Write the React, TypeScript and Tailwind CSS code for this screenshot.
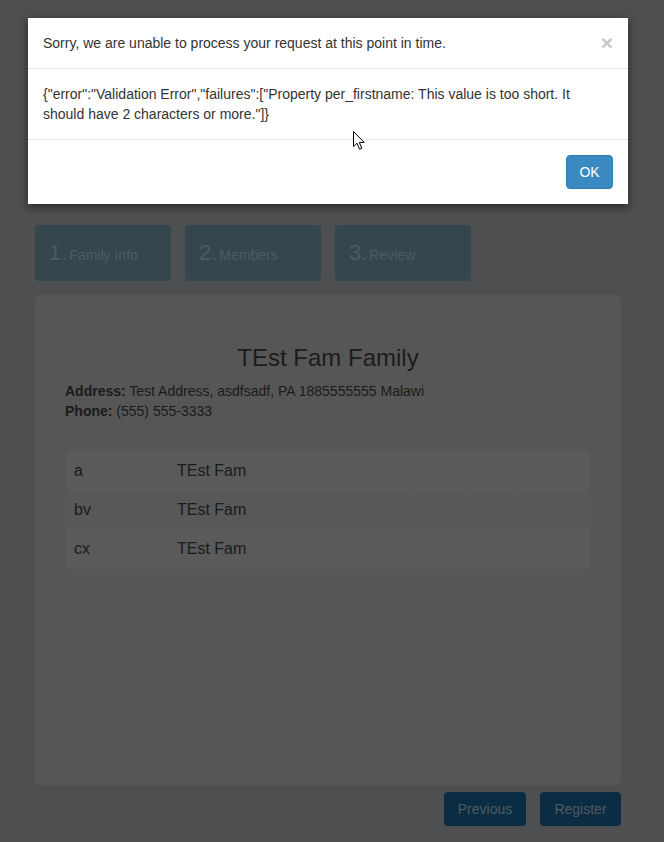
const STEPS = [
  { n: "1.", label: "Family Info" },
  { n: "2.", label: "Members" },
  { n: "3.", label: "Review" },
];

const MEMBERS = [
  { first: "a", last: "TEst Fam" },
  { first: "bv", last: "TEst Fam" },
  { first: "cx", last: "TEst Fam" },
];

export default function App() {
  return (
    <div className="relative min-h-[842px] w-[664px] bg-[#4e4f51] font-['Liberation_Sans',Arial,sans-serif] text-[14px] text-[#1b1b1b]">
      <div className="ml-[35px] w-[586px] pt-[225px]">
        <div className="flex gap-[14px]">
          {STEPS.map((s) => (
            <div
              key={s.n}
              className="flex h-[56px] w-[136px] items-center rounded-[4px] bg-[#36464e] px-[14px] text-[#4b5b63]"
            >
              <span className="text-[22px] leading-none">{s.n}</span>
              <span className="ml-[2px] mt-[4px] text-[14px]">{s.label}</span>
            </div>
          ))}
        </div>

        <section className="mt-[14px] h-[490px] rounded-[5px] bg-[#565656] px-[30px] pt-[50px]">
          <h2 className="text-center text-[24px] leading-[26px] text-[#1c1c1c]">TEst Fam Family</h2>
          <div className="mt-[10px] leading-[20px]">
            <p>
              <b>Address:</b> Test Address, asdfsadf, PA 1885555555 Malawi
            </p>
            <p>
              <b>Phone:</b> (555) 555-3333
            </p>
          </div>

          <table className="mt-[30px] ml-[1px] w-[524px] border-collapse text-[16px]">
            <tbody>
              {MEMBERS.map((m, i) => (
                <tr key={m.first} className={i % 2 === 0 ? "bg-[#5a5a5a]" : "bg-[#585858]"}>
                  <td className="h-[39px] w-[103px] border-t border-[#5c5c5c] pl-[8px]">{m.first}</td>
                  <td className="w-[246px] border-t border-[#5c5c5c] pl-[8px]">{m.last}</td>
                  <td className="w-[50px] border-t border-l border-[#5c5c5c]" />
                  <td className="w-[50px] border-t border-l border-[#5c5c5c]" />
                  <td className="border-t border-l border-[#5c5c5c]" />
                </tr>
              ))}
            </tbody>
          </table>
        </section>

        <div className="mt-[7px] flex justify-end gap-[14px]">
          <button className="h-[34px] w-[82px] rounded-[4px] bg-[#0b2d44] text-[14px] text-[#4f5a62]">Previous</button>
          <button className="h-[34px] w-[81px] rounded-[4px] bg-[#0b2d44] text-[14px] text-[#4f5a62]">Register</button>
        </div>
      </div>

      {/* modal */}
      <div className="absolute left-[28px] top-[18px] w-[600px] bg-white text-[#333] shadow-[0_3px_9px_rgba(0,0,0,0.5)]">
        <div className="flex items-center justify-between border-b border-[#e5e5e5] px-[15px] py-[15px]">
          <p className="leading-[20px]">Sorry, we are unable to process your request at this point in time.</p>
          <span className="text-[21px] font-bold leading-[20px] text-[#c6c6c6]">×</span>
        </div>
        <div className="border-b border-[#e5e5e5] px-[15px] py-[15px] leading-[20px]">
          {'{"error":"Validation Error","failures":["Property per_firstname: This value is too short. It should have 2 characters or more."]}'}
        </div>
        <div className="flex justify-end p-[15px]">
          <button className="h-[34px] w-[47px] rounded-[4px] border border-[#2e7db3] bg-[#3a89c0] text-[14px] text-white">OK</button>
        </div>
      </div>

      {/* mouse cursor */}
      <svg className="absolute left-[353px] top-[131px]" width="13" height="20" viewBox="0 0 13 20">
        <path d="M0.5 0.5 L0.5 15.5 L4 12.2 L6.6 18.3 L8.8 17.3 L6.3 11.4 L11.2 11.4 Z" fill="#fff" stroke="#000" strokeWidth="1" strokeLinejoin="round" />
      </svg>
    </div>
  );
}
